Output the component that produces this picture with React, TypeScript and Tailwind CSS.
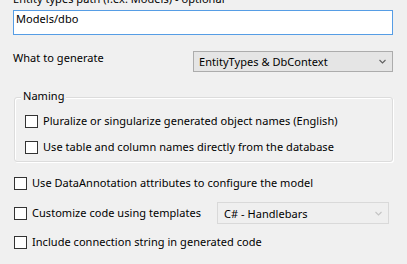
import React from "react";

const font = { fontFamily: '"Segoe UI", "Noto Sans", sans-serif', letterSpacing: "0.04px" };

function Check({ label }: { label: string }) {
  return (
    <div className="flex items-center h-[13px]">
      <div className="w-[13px] h-[13px] border border-[#333333] bg-white shrink-0" />
      <span className="ml-[5px] mb-[2px] text-[11px] leading-[15px] text-black whitespace-nowrap">{label}</span>
    </div>
  );
}

function Chevron({ color }: { color: string }) {
  return (
    <svg width="7" height="5" viewBox="0 0 7 5" className="shrink-0">
      <path d="M0.5 1 L3.5 4 L6.5 1" fill="none" stroke={color} strokeWidth="1.1" />
    </svg>
  );
}

export default function App() {
  return (
    <div
      className="w-[407px] h-[264px] bg-[#f0f0f0] overflow-hidden pl-[13px] pr-[14px] text-black"
      style={font}
    >
      <div className="mt-[-9px] h-[15px] text-[11px] leading-[15px] whitespace-nowrap">
        Entity types path (f.ex. Models) - optional
      </div>
      <div className="mt-[4px] h-[25px] w-[380px] border border-[#569de5] bg-white pl-[2px] text-[11px] leading-[15px]">
        Models/dbo
      </div>

      <div className="mt-[16px] flex items-start">
        <div className="mt-[-1px] text-[11px] leading-[15px] w-[180px]">What to generate</div>
        <div className="h-[21px] w-[200px] border border-[#acacac] bg-[#e5e5e5] flex items-center pl-[5px] pr-[6px]">
          <span className="flex-1 text-[11px] leading-[15px]">EntityTypes &amp; DbContext</span>
          <Chevron color="#606060" />
        </div>
      </div>

      <div className="relative mt-[25px] ml-[1px] w-[379px] h-[65px] border border-[#dcdcdc] rounded-[3px] shadow-[inset_1px_1px_0_#ffffff,1px_1px_0_#ffffff] pl-[10px] pt-[17px]">
        <div className="absolute left-[6px] top-[-10px] px-[2px] bg-[#f0f0f0] text-[11px] leading-[15px]">Naming</div>
        <div className="flex flex-col gap-[13px]">
          <Check label="Pluralize or singularize generated object names (English)" />
          <Check label="Use table and column names directly from the database" />
        </div>
      </div>

      <div className="mt-[15px] ml-[1px] flex flex-col">
        <Check label="Use DataAnnotation attributes to configure the model" />
        <div className="mt-[12px] flex items-center">
          <div className="w-[203px]">
            <Check label="Customize code using templates" />
          </div>
          <div className="h-[22px] w-[172px] border border-[#d9d9d9] bg-[#efefef] flex items-center pl-[6px] pr-[6px]">
            <span className="flex-1 text-[11px] leading-[15px]">C# - Handlebars</span>
            <Chevron color="#c4c4c4" />
          </div>
        </div>
        <div className="mt-[12px]">
          <Check label="Include connection string in generated code" />
        </div>
      </div>
    </div>
  );
}
